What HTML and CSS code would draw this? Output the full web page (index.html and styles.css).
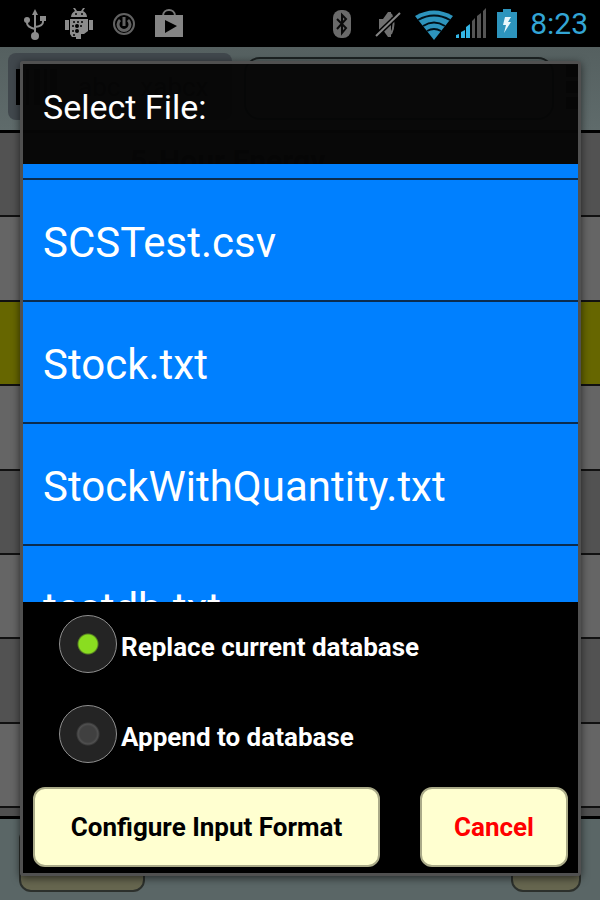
FILE: index.html
```html
<!DOCTYPE html>
<html lang="en">
<head>
    <meta charset="UTF-8">
    <meta name="viewport" content="width=device-width, initial-scale=1.0">
    <title>Select File</title>
    <link rel="stylesheet" href="styles.css">
</head>
<body>
    <div class="screen">
        <header class="status-bar">
            <div class="status-left">
                <!-- usb -->
                <svg width="22" height="32" viewBox="0 0 22 32" fill="none" stroke="#8c8c8c" stroke-width="2">
                    <path d="M11 5v22M3 12v3q0 4 8 6M19 9v5q0 4-8 5"/>
                    <path d="M11 1l3 6H8z" fill="#8c8c8c" stroke="none"/>
                    <circle cx="11" cy="28" r="4" fill="#8c8c8c" stroke="none"/>
                    <circle cx="3" cy="12" r="3" fill="#8c8c8c" stroke="none"/>
                    <path d="M16 8h6v5h-6z" fill="#8c8c8c" stroke="none"/>
                </svg>
                <!-- debugging -->
                <svg width="30" height="32" viewBox="0 0 30 32" fill="#8c8c8c">
                    <path d="M7 9c0-3 2-5 4-6L9 0h2l2 3h4l2-3h2l-2 3c2 1 4 3 4 6z"/>
                    <path d="M1 12h4v10H1zM25 12h4v10h-4zM6 11h18v12l-4 3h-3v5h-5v-2H8l-2-3z"/>
                    <g fill="#000">
                        <circle cx="12" cy="6" r="1"/><circle cx="18" cy="6" r="1"/>
                        <circle cx="10" cy="14" r="1"/><circle cx="14" cy="14" r="1"/><circle cx="18" cy="14" r="1"/>
                        <circle cx="9" cy="18" r="1"/><circle cx="13" cy="18" r="2"/><circle cx="17" cy="18" r="1"/>
                        <circle cx="9" cy="23" r="1"/><circle cx="13" cy="23" r="2"/><circle cx="10" cy="27" r="1"/>
                    </g>
                </svg>
                <!-- power -->
                <svg width="24" height="32" viewBox="0 0 24 32" fill="none" stroke="#626262" stroke-width="2">
                    <circle cx="12" cy="16" r="10"/>
                    <path d="M8 12a6 6 0 1 0 8 0M12 9v9" stroke-width="3"/>
                </svg>
                <!-- store -->
                <svg width="30" height="32" viewBox="0 0 30 32">
                    <path d="M9 8c0-8 12-8 12 0" fill="none" stroke="#777" stroke-width="2"/>
                    <path d="M1 7h28v22H1z" fill="#858585"/>
                    <path d="M11 12l12 6-12 7z" fill="#000"/>
                </svg>
            </div>
            <div class="status-right">
                <!-- bluetooth -->
                <svg class="bluetooth" width="20" height="32" viewBox="0 0 20 32">
                    <rect x="1" y="2" width="18" height="28" rx="8" fill="#6a6a6a"/>
                    <path d="M5 11l9 9-4 5V7l4 4-9 10" fill="none" stroke="#0a0a0a" stroke-width="2"/>
                </svg>
                <!-- muted -->
                <svg class="muted" width="26" height="32" viewBox="0 0 26 32">
                    <path d="M4 11h4l5-7h3v25h-3l-5-7H4z" fill="#707070"/>
                    <path d="M16 6q5 10 0 20" fill="none" stroke="#707070" stroke-width="2"/>
                    <path d="M1 28L25 5" stroke="#000" stroke-width="5"/>
                    <path d="M1 28L25 5" stroke="#858585" stroke-width="2"/>
                </svg>
                <!-- wifi -->
                <svg class="wifi" width="38" height="32" viewBox="0 0 38 32">
                    <path d="M0 8Q19-3 38 8L19 32z" fill="#2d94bd"/>
                    <path d="M3 12q16-9 32 0M8 18q11-7 22 0M12 23q7-4 14 0" fill="none" stroke="#001018" stroke-width="2"/>
                </svg>
                <!-- signal -->
                <svg class="signal" width="33" height="32" viewBox="0 0 33 32">
                    <path d="M1 30v-3l3-1v4zM6 30v-6l4-2v8zM11 30V19l4-3v14z" fill="#33b5e5"/>
                    <path d="M17 30V13l3-3v20zM22 30V8l4-3v25zM28 30V3l3-3v30z" fill="#555"/>
                </svg>
                <!-- battery -->
                <svg class="battery" width="20" height="32" viewBox="0 0 20 32">
                    <path d="M6 1h8v3h6v26H0V4h6z" fill="#2d94bd"/>
                    <path d="M8 9h6l-3 5h3L7 25l2-8H6z" fill="#e8f6fc"/>
                </svg>
                <time class="clock">8:23</time>
            </div>
        </header>

        <main class="app">
            <div class="toolbar">
                <div class="scan">
                    <svg width="42" height="36" viewBox="0 0 42 36">
                        <path d="M0 0h7v36H0zM10 0h3v36h-3zM18 0h6v36h-6zM28 0h3v36h-3zM34 0h7v36h-7z"/>
                    </svg>
                    <span>abc</span>
                    <span>xabcx</span>
                </div>
                <div class="search"></div>
                <div class="dots"><i></i><i></i><i></i></div>
            </div>
            <div class="stock">
                <div class="stock-row dark">5-Hour Energy</div>
                <div class="stock-row"></div>
                <div class="stock-row picked"></div>
                <div class="stock-row"></div>
                <div class="stock-row dark"></div>
                <div class="stock-row"></div>
                <div class="stock-row dark"></div>
                <div class="stock-row"></div>
            </div>
            <div class="app-footer">
                <div class="foot-btn wide"></div>
                <div class="foot-btn"></div>
            </div>
        </main>

        <section class="dialog" role="dialog" aria-labelledby="dialog-title">
            <h1 id="dialog-title">Select File:</h1>
            <ul class="files">
                <li class="file-end"></li>
                <li><a href="#">SCSTest.csv</a></li>
                <li><a href="#">Stock.txt</a></li>
                <li><a href="#">StockWithQuantity.txt</a></li>
                <li><a href="#">testdb.txt</a></li>
            </ul>
            <form class="options">
                <div class="option">
                    <input type="radio" id="replace" name="mode" checked>
                    <label for="replace">Replace current database</label>
                </div>
                <div class="option">
                    <input type="radio" id="append" name="mode">
                    <label for="append">Append to database</label>
                </div>
                <div class="actions">
                    <button type="button" class="configure">Configure Input Format</button>
                    <button type="button" class="cancel">Cancel</button>
                </div>
            </form>
        </section>
    </div>
</body>
</html>
```
FILE: styles.css
```css
* {
    box-sizing: border-box;
}

body {
    margin: 0;
    font-family: Roboto, sans-serif;
    background: #000;
    color: white;
}

.screen {
    position: relative;
    display: flex;
    flex-direction: column;
    height: 100vh;
    min-height: 600px;
    overflow: hidden;
}

/* Status bar */
.status-bar {
    display: flex;
    justify-content: space-between;
    align-items: center;
    height: 47px;
    padding: 0 12px 0 24px;
    background: #000;
}

.status-left,
.status-right {
    display: flex;
    align-items: center;
}

.status-left {
    gap: 18px;
}

.bluetooth {
    margin-right: 23px;
}

.muted {
    margin-right: 14px;
}

.wifi {
    margin-right: 2px;
}

.signal {
    margin-right: 9px;
}

.battery {
    margin-right: 13px;
}

.clock {
    font-size: 30px;
    line-height: 46px;
    color: #33a5d5;
}

/* Screen behind the dialog */
.app {
    flex: 1;
    display: flex;
    flex-direction: column;
    background: #5a6666;
    color: #000;
}

.toolbar {
    display: flex;
    gap: 12px;
    height: 86px;
    padding: 6px 12px 10px 8px;
    border-bottom: 3px solid #000;
    background: linear-gradient(#556060, #5f6b6b);
}

.scan {
    display: flex;
    align-items: center;
    gap: 20px;
    width: 224px;
    padding: 0 8px;
    border-radius: 8px;
    background: #41484d;
    font-size: 26px;
}

.search {
    flex: 1;
    margin: 4px 0 0;
    border: 2px solid #1c2222;
    border-radius: 16px;
}

.dots {
    display: flex;
    flex-direction: column;
    justify-content: center;
    gap: 4px;
    width: 22px;
}

.dots i {
    width: 12px;
    height: 12px;
    background: #000;
}

.stock {
    flex: 1;
    display: flex;
    flex-direction: column;
    padding-bottom: 8px;
    border-bottom: 3px solid #000;
    background: #505050;
}

.stock-row {
    flex: 1;
    padding: 10px 130px;
    border-bottom: 2px solid #111;
    background: #656565;
    font-size: 30px;
    line-height: 36px;
    font-weight: bold;
}

.stock-row.dark {
    background: #525252;
}

.stock-row.picked {
    background: #666600;
}

.app-footer {
    display: flex;
    justify-content: space-between;
    height: 81px;
    padding: 8px 19px;
}

.foot-btn {
    width: 70px;
    border: 2px solid #2c302c;
    border-radius: 12px;
    background: #66664f;
}

.foot-btn.wide {
    width: 126px;
}

/* Dialog */
.dialog {
    position: absolute;
    inset: 61px 19px 24px 20px;
    display: flex;
    flex-direction: column;
    border: 3px solid #505050;
    border-radius: 3px;
    box-shadow: 0 2px 8px rgba(0, 0, 0, 0.6);
}

.dialog h1 {
    margin: 0;
    padding: 0 20px;
    height: 100px;
    line-height: 86px;
    font-size: 34px;
    font-weight: normal;
    background: rgba(6, 6, 6, 0.97);
}

.files {
    flex: 1;
    min-height: 0;
    margin: 0;
    padding: 0;
    list-style: none;
    overflow: hidden;
    background: #0080ff;
}

.files li {
    height: 122px;
    border-bottom: 2px solid #0a2c50;
}

.files .file-end {
    height: 16px;
}

.files a {
    display: block;
    padding: 0 20px;
    line-height: 126px;
    font-size: 42px;
    color: white;
    text-decoration: none;
}

.options {
    padding: 0 10px 6px;
    background: #000;
}

.option {
    display: flex;
    align-items: center;
    gap: 4px;
    height: 90px;
    padding: 0 26px 6px;
    font-size: 26px;
    font-weight: bold;
}

.option label {
    padding-top: 6px;
}

.option input {
    appearance: none;
    width: 58px;
    height: 58px;
    margin: 0;
    border: 1px solid #909090;
    border-radius: 50%;
    background: radial-gradient(circle, #404040 8px, #505050 10px, #242424 12px);
}

.option input:checked {
    background: radial-gradient(circle, #8add20 9px, #242424 11px);
}

.actions {
    display: flex;
    justify-content: space-between;
    gap: 40px;
    padding-top: 5px;
}

.actions button {
    height: 80px;
    border: 2px solid #aaaa88;
    border-radius: 12px;
    background: #ffffd0;
    font-family: inherit;
    font-size: 26px;
    font-weight: bold;
}

.configure {
    flex: 1;
    color: #000;
}

.cancel {
    width: 148px;
    color: #ff0000;
}
```
